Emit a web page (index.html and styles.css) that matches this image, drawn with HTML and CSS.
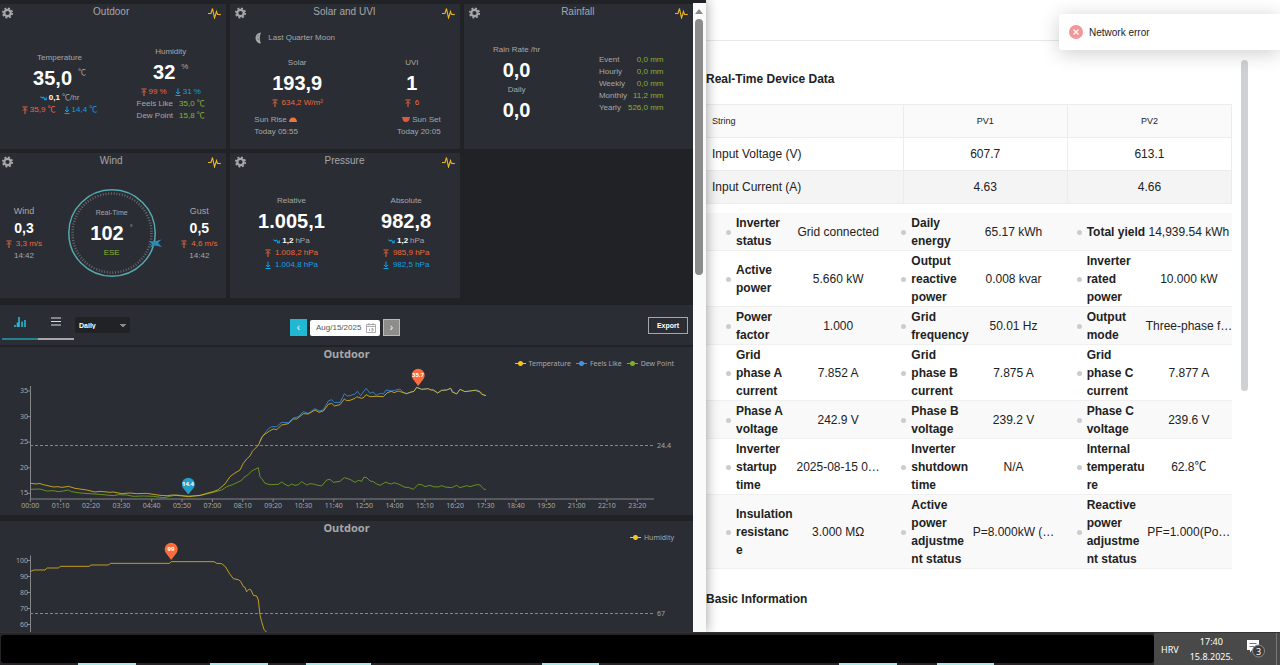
FILE: index.html
```html
<!DOCTYPE html>
<html lang="en">
<head>
    <meta charset="UTF-8">
    <title>Weather and Inverter</title>
    <link rel="stylesheet" href="styles.css">
</head>
<body>
    <svg class="sprite" aria-hidden="true">
        <symbol id="gear" viewBox="0 0 12 12">
            <circle cx="6" cy="6" r="3.2" fill="none" stroke="currentColor" stroke-width="2.2"/>
            <circle cx="6" cy="6" r="4.7" fill="none" stroke="currentColor" stroke-width="1.8" stroke-dasharray="1.9 1.79"/>
        </symbol>
        <symbol id="pulse" viewBox="0 0 13 12">
            <path d="M0 6.500H3L4.500 1.500L6.500 11L8.500 4.500L9.500 7.500H12" fill="none" stroke="currentColor" stroke-width="1.100"/>
            <circle cx="12" cy="7.500" r=".8" fill="currentColor"/>
        </symbol>
        <symbol id="up" viewBox="0 0 6 8">
            <path d="M.5 1H5.500M3 8V2.500M1 4.500L3 2.500L5 4.500" fill="none" stroke="currentColor"/>
        </symbol>
        <symbol id="down" viewBox="0 0 6 8">
            <path d="M.5 7.500H5.500M3 .5V6M1 4L3 6L5 4" fill="none" stroke="currentColor"/>
        </symbol>
        <symbol id="trend" viewBox="0 0 8 6">
            <path d="M.5 1.500L2.500 3L4 2L6 4.500M7.200 2V5H4.500" fill="none" stroke="currentColor" stroke-width="1.200"/>
        </symbol>
    </svg>

    <main class="windows">
        <section class="weather">
            <div class="weather-page">
                <div class="cards">
                    <article class="card">
                        <header>
                            <button class="icon" aria-label="Settings"><svg><use href="#gear"/></svg></button>
                            <h2>Outdoor</h2>
                            <button class="icon pulse" aria-label="Graph"><svg><use href="#pulse"/></svg></button>
                        </header>
                        <div class="body outdoor">
                            <div class="stat">
                                <span>Temperature</span>
                                <div class="value">35,0<sup>℃</sup></div>
                                <div class="line"><svg class="low"><use href="#trend"/></svg><b>0,1</b> ℃/hr</div>
                                <div class="line pair">
                                    <span class="high"><svg><use href="#up"/></svg>35,9 ℃</span>
                                    <span class="low"><svg><use href="#down"/></svg>14,4 ℃</span>
                                </div>
                            </div>
                            <div class="stat">
                                <span>Humidity</span>
                                <div class="value">32<sup>%</sup></div>
                                <div class="line pair">
                                    <span class="high"><svg><use href="#up"/></svg>99 %</span>
                                    <span class="low"><svg><use href="#down"/></svg>31 %</span>
                                </div>
                                <dl class="totals">
                                    <dt>Feels Like</dt><dd>35,0 ℃</dd>
                                    <dt>Dew Point</dt><dd>15,8 ℃</dd>
                                </dl>
                            </div>
                        </div>
                    </article>

                    <article class="card">
                        <header>
                            <button class="icon" aria-label="Settings"><svg><use href="#gear"/></svg></button>
                            <h2>Solar and UVI</h2>
                            <button class="icon pulse" aria-label="Graph"><svg><use href="#pulse"/></svg></button>
                        </header>
                        <div class="moon">
                            <svg viewBox="0 0 8 12"><path d="M7 .5A5.500 5.500 0 0 0 7 11.500Q4.500 6 7 .5Z" fill="#a6a7a9"/><path d="M3 4.500L5 3.500M3 7H5" stroke="#777"/></svg>
                            Last Quarter Moon
                        </div>
                        <div class="body solar">
                            <div class="stat">
                                <span>Solar</span>
                                <div class="value">193,9</div>
                                <div class="line high"><svg><use href="#up"/></svg>634,2 W/m²</div>
                            </div>
                            <div class="stat">
                                <span>UVI</span>
                                <div class="value">1</div>
                                <div class="line high"><svg><use href="#up"/></svg>6</div>
                            </div>
                        </div>
                        <div class="sun">
                            <div>Sun Rise <svg viewBox="0 0 8 5"><path d="M0 5A4 4.500 0 0 1 8 5Z" fill="#f0743d"/></svg><br>Today 05:55</div>
                            <div><svg viewBox="0 0 8 5"><path d="M0 0H8V1H7.500A3.500 4 0 0 1 .5 1H0Z" fill="#dc5a45"/></svg> Sun Set<br>Today 20:05</div>
                        </div>
                    </article>

                    <article class="card">
                        <header>
                            <button class="icon" aria-label="Settings"><svg><use href="#gear"/></svg></button>
                            <h2>Rainfall</h2>
                            <button class="icon pulse" aria-label="Graph"><svg><use href="#pulse"/></svg></button>
                        </header>
                        <div class="body rain">
                            <div class="stat">
                                <span>Rain Rate /hr</span>
                                <div class="value">0,0</div>
                                <span>Daily</span>
                                <div class="value">0,0</div>
                            </div>
                            <dl class="totals">
                                <dt>Event</dt><dd>0,0 mm</dd>
                                <dt>Hourly</dt><dd>0,0 mm</dd>
                                <dt>Weekly</dt><dd>0,0 mm</dd>
                                <dt>Monthly</dt><dd>11,2 mm</dd>
                                <dt>Yearly</dt><dd>526,0 mm</dd>
                            </dl>
                        </div>
                    </article>

                    <article class="card">
                        <header>
                            <button class="icon" aria-label="Settings"><svg><use href="#gear"/></svg></button>
                            <h2>Wind</h2>
                            <button class="icon pulse" aria-label="Graph"><svg><use href="#pulse"/></svg></button>
                        </header>
                        <div class="body wind">
                            <div class="stat small">
                                <span>Wind</span>
                                <div class="value">0,3</div>
                                <div class="line high"><svg><use href="#up"/></svg>3,3 m/s</div>
                                <div class="line">14:42</div>
                            </div>
                            <div class="dial">
                                <svg viewBox="0 0 100 100">
                                    <circle cx="50" cy="50" r="43.200" fill="none" stroke="#56a9ae" stroke-width="1.500"/>
                                    <circle cx="50" cy="50" r="39.500" fill="none" stroke="#66686d" stroke-width="2.500" stroke-dasharray="1 1.758"/>
                                    <path d="M86.500 58L92 58.500L99.500 56.500L96 60L100 64L93 62.500L88 64.500L90 61Z" fill="#2c8ab5"/>
                                </svg>
                                <div class="stat">
                                    <small>Real-Time</small>
                                    <div class="value">102<sup>°</sup></div>
                                    <span class="green">ESE</span>
                                </div>
                            </div>
                            <div class="stat small">
                                <span>Gust</span>
                                <div class="value">0,5</div>
                                <div class="line high"><svg><use href="#up"/></svg>4,6 m/s</div>
                                <div class="line">14:42</div>
                            </div>
                        </div>
                    </article>

                    <article class="card">
                        <header>
                            <button class="icon" aria-label="Settings"><svg><use href="#gear"/></svg></button>
                            <h2>Pressure</h2>
                            <button class="icon pulse" aria-label="Graph"><svg><use href="#pulse"/></svg></button>
                        </header>
                        <div class="body pressure">
                            <div class="stat">
                                <span>Relative</span>
                                <div class="value">1.005,1</div>
                                <div class="line"><svg class="low"><use href="#trend"/></svg><b>1,2</b> hPa</div>
                                <div class="line high"><svg><use href="#up"/></svg>1.008,2 hPa</div>
                                <div class="line low"><svg><use href="#down"/></svg>1.004,8 hPa</div>
                            </div>
                            <div class="stat">
                                <span>Absolute</span>
                                <div class="value">982,8</div>
                                <div class="line"><svg class="low"><use href="#trend"/></svg><b>1,2</b> hPa</div>
                                <div class="line high"><svg><use href="#up"/></svg>985,9 hPa</div>
                                <div class="line low"><svg><use href="#down"/></svg>982,5 hPa</div>
                            </div>
                        </div>
                    </article>
                </div>

                <div class="toolbar">
                    <div class="views">
                        <button class="view active" aria-label="Chart view">
                            <svg viewBox="0 0 12 10"><path d="M1 10V8M3.500 10V5.500M5 10V0M8 10V4.500M11 10V3" stroke="currentColor" stroke-width="1.600"/></svg>
                        </button>
                        <button class="view" aria-label="List view">
                            <svg viewBox="0 0 12 10"><path d="M1 1H11M1 4.500H11M1 8H11" stroke="currentColor" stroke-width="1.200"/></svg>
                        </button>
                        <select class="period" aria-label="Period"><option>Daily</option></select>
                    </div>
                    <div class="dates">
                        <button class="step" aria-label="Previous day">‹</button>
                        <label class="date">
                            <input type="text" value="Aug/15/2025" aria-label="Date">
                            <svg viewBox="0 0 10 10"><path d="M.5 1.500H9.500V9.500H.5ZM.5 3.500H9.500M3 0V2.500M7 0V2.500M3.500 5.500V8M5.500 5.500H7V6.700H5.500M5.500 8H7V6.700" fill="none" stroke="#999" stroke-width=".8"/></svg>
                        </label>
                        <button class="step next" aria-label="Next day">›</button>
                    </div>
                    <button class="export">Export</button>
                </div>

                <section class="chart">
                    <h3>Outdoor</h3>
                    <ul class="legend">
                        <li class="yellow">Temperature</li>
                        <li class="blue">Feels Like</li>
                        <li class="lime">Dew Point</li>
                    </ul>
                    <svg class="plot" viewBox="0 0 693 144">
                        <path class="average" d="M30 74.500H654"/>
                        <text x="657" y="77">24.4</text>
                        <g class="axis" id="temperatureAxis"></g>
                        <!-- readings are on a grid three times finer than the plot -->
                        <g class="series" transform="translate(0 -71) scale(.33333)">
                            <polyline class="lime" points="92,568 120,567 140,573 160,572 175,575 190,573 205,570 215,575 240,579 270,581 300,583 340,587 355,584 380,585 400,589 430,588 460,589 490,593 510,589 530,585 565,588 600,587 640,577 665,570 680,560 700,553 725,541 732,532 740,527 745,524 755,513 765,508 775,503 780,530 787,538 795,550 810,554 835,553 845,546 855,553 865,558 875,552 885,556 895,554 905,545 920,555 930,551 940,552 950,555 965,558 980,540 990,538 1000,547 1020,544 1033,533 1050,538 1065,547 1075,541 1085,544 1092,531 1100,533 1110,543 1120,545 1130,552 1140,556 1158,546 1165,550 1175,552 1182,548 1195,552 1215,562 1225,562 1240,568 1255,553 1265,554 1275,560 1290,556 1300,560 1315,561 1325,557 1335,561 1355,563 1370,556 1380,563 1400,557 1410,560 1430,554 1440,555 1452,568 1458,568"/>
                            <polyline class="blue" points="780,425 790,406 805,386 815,380 830,380 845,367 865,368 880,354 895,350 910,335 925,340 945,326 957,333 970,330 985,303 995,299 1003,308 1020,307 1028,292 1033,281 1042,288 1050,287 1065,282 1072,274 1082,287 1098,265 1110,280 1120,276 1128,286 1142,280 1150,282 1158,270 1175,273 1200,267 1210,277 1220,281 1230,277 1242,274 1250,262 1265,268 1285,266 1300,272 1313,279 1325,271 1340,270 1352,265 1362,278 1370,282 1380,268 1395,275 1430,270 1440,274 1448,283 1458,287"/>
                            <polyline class="yellow" points="92,550 110,552 118,550 130,554 160,561 173,560 185,562 195,561 205,559 225,565 260,570 285,576 300,574 330,577 340,576 365,581 390,579 410,581 440,580 480,586 500,587 520,585 565,590 600,586 620,580 640,575 655,569 675,552 690,530 705,519 720,510 730,490 740,477 750,468 757,454 775,436 785,412 790,406 810,392 820,387 830,389 845,375 865,371 880,357 890,357 910,341 925,342 945,330 957,337 970,333 985,313 995,310 1003,318 1020,314 1033,297 1040,302 1050,301 1065,295 1070,290 1085,295 1092,292 1098,284 1110,290 1130,289 1150,290 1162,278 1175,274 1182,278 1195,273 1210,278 1220,281 1230,277 1242,274 1250,262 1265,268 1285,266 1292,270 1300,269 1313,279 1325,271 1340,270 1352,265 1357,277 1362,278 1370,282 1380,268 1395,275 1410,273 1425,271 1440,276 1445,283 1458,287"/>
                        </g>
                        <g class="pin cold">
                            <path d="M188.300 123.500L183 117A6.500 6.500 0 1 1 193.600 117Z"/>
                            <text x="188" y="115">14.4</text>
                        </g>
                        <g class="pin">
                            <path d="M418.200 15L412.900 8A6.500 6.500 0 1 1 423.500 8Z"/>
                            <text x="418" y="6">35.7</text>
                        </g>
                    </svg>
                </section>

                <section class="chart">
                    <h3>Outdoor</h3>
                    <ul class="legend">
                        <li class="yellow">Humidity</li>
                    </ul>
                    <svg class="plot" viewBox="0 0 693 144">
                        <path class="average" d="M30 68.500H654"/>
                        <text x="657" y="71">67</text>
                        <g class="axis" id="humidityAxis"></g>
                        <g class="series" transform="translate(0 -45) scale(.33333)">
                            <polyline class="yellow" points="92,214 103,210 135,210 142,204 175,204 182,199 268,199 273,195 325,195 332,190 508,190 514,185 642,185 650,190 665,191 677,201 688,220 700,236 715,239 722,244 730,260 735,262 740,275 748,267 753,270 760,286 770,288 775,300 780,345 785,365 792,388 800,397 805,420"/>
                        </g>
                        <g class="pin">
                            <path d="M171.200 15L165.900 8A6.500 6.500 0 1 1 176.500 8Z"/>
                            <text x="171" y="6">99</text>
                        </g>
                    </svg>
                </section>
            </div>
            <div class="scrollbar"><i></i></div>
        </section>

        <section class="inverter">
            <div class="topline"></div>
            <div class="toast" role="alert">
                <svg viewBox="0 0 14 14"><circle cx="7" cy="7" r="7" fill="#f3969a"/><path d="M4.500 4.500L9.500 9.500M9.500 4.500L4.500 9.500" stroke="#fff" stroke-width="1.200"/></svg>
                Network error
            </div>
            <div class="device">
                <h1>Real-Time Device Data</h1>
                <table class="strings">
                    <thead>
                        <tr><th>String</th><th>PV1</th><th>PV2</th></tr>
                    </thead>
                    <tbody>
                        <tr><td>Input Voltage (V)</td><td>607.7</td><td>613.1</td></tr>
                        <tr><td>Input Current (A)</td><td>4.63</td><td>4.66</td></tr>
                    </tbody>
                </table>
                <table class="specs">
                    <tr><th>Inverter status</th><td>Grid connected</td><th>Daily energy</th><td>65.17 kWh</td><th>Total yield</th><td>14,939.54 kWh</td></tr>
                    <tr><th>Active power</th><td>5.660 kW</td><th>Output reactive power</th><td>0.008 kvar</td><th>Inverter rated power</th><td>10.000 kW</td></tr>
                    <tr><th>Power factor</th><td>1.000</td><th>Grid frequency</th><td>50.01 Hz</td><th>Output mode</th><td>Three-phase f…</td></tr>
                    <tr><th>Grid phase A current</th><td>7.852 A</td><th>Grid phase B current</th><td>7.875 A</td><th>Grid phase C current</th><td>7.877 A</td></tr>
                    <tr><th>Phase A voltage</th><td>242.9 V</td><th>Phase B voltage</th><td>239.2 V</td><th>Phase C voltage</th><td>239.6 V</td></tr>
                    <tr><th>Inverter startup time</th><td>2025-08-15 0…</td><th>Inverter shutdown time</th><td>N/A</td><th>Internal temperature</th><td>62.8℃</td></tr>
                    <tr><th>Insulation resistance</th><td>3.000 MΩ</td><th>Active power adjustment status</th><td>P=8.000kW (…</td><th>Reactive power adjustment status</th><td>PF=1.000(Po…</td></tr>
                </table>
                <h1 class="basic">Basic Information</h1>
            </div>
            <div class="thumb"></div>
        </section>
    </main>

    <footer class="taskbar">
        <div class="apps">
            <div class="blank"></div>
            <div class="running"><i></i><i></i><i></i><i></i><i></i><i></i></div>
        </div>
        <span>HRV</span>
        <time>17:40<br>15.8.2025.</time>
        <button class="notices" aria-label="Notifications">
            <svg viewBox="0 0 20 20"><path d="M1 1H13V11H6L4 13.500V11H1Z" fill="#fff"/><path d="M3.500 4.500H10.500M3.500 7.500H8" stroke="#777"/><circle cx="12.500" cy="12" r="6" fill="#3d3d3d" stroke="#8d8d8d"/><text x="12.500" y="15.500" text-anchor="middle">3</text></svg>
        </button>
    </footer>

    <script>
        const ns = 'http://www.w3.org/2000/svg';

        function addPath(parent, d) {
            const path = document.createElementNS(ns, 'path');
            path.setAttribute('d', d);
            parent.appendChild(path);
        }

        function addText(parent, x, y, anchor, value) {
            const text = document.createElementNS(ns, 'text');
            text.setAttribute('x', x);
            text.setAttribute('y', y);
            text.setAttribute('text-anchor', anchor);
            text.textContent = value;
            parent.appendChild(text);
        }

        function drawValues(id, labels, top, step, bottom) {
            const axis = document.getElementById(id);
            addPath(axis, `M30.5 ${top - 5}V${bottom}`);

            labels.forEach((label, i) => {
                const y = top + i * step;
                addPath(axis, `M27 ${y}H30`);
                addText(axis, 28, y + 2, 'end', label);
            });
        }

        function drawTimes(id, bottom) {
            const axis = document.getElementById(id);
            addPath(axis, `M30 ${bottom}H654`);

            // every 70 minutes
            for (let i = 0; i < 21; i++) {
                const x = 30.3 + i * 30.35;
                const hours = String(Math.floor(i * 70 / 60)).padStart(2, '0');
                const minutes = String(i * 70 % 60).padStart(2, '0');
                addPath(axis, `M${x} ${bottom}V${bottom + 3}`);
                addText(axis, x, bottom + 9, 'middle', `${hours}:${minutes}`);
            }
        }

        drawValues('temperatureAxis', [35, 30, 25, 20, 15], 20, 25.6, 128);
        drawTimes('temperatureAxis', 128);
        drawValues('humidityAxis', [100, 90, 80, 70, 60], 15.5, 16, 128);
    </script>
</body>
</html>
```
FILE: styles.css
```css
* {
    box-sizing: border-box;
}

body {
    display: flex;
    flex-direction: column;
    height: 100vh;
    margin: 0;
    overflow: hidden;
    font-family: "Liberation Sans", Arial, "Noto Sans CJK SC", sans-serif;
}

h1, h2, h3, ul, dl, dd {
    margin: 0;
    padding: 0;
}

button, input, select {
    margin: 0;
    padding: 0;
    border: none;
    background: none;
    font-family: inherit;
    color: inherit;
}

.sprite {
    display: none;
}

.windows {
    display: grid;
    grid-template-columns: 706fr 574fr;
    flex: 1;
    min-height: 0;
    overflow: hidden;
}

/* weather station */
.weather {
    position: relative;
    z-index: 1;
    display: flex;
    min-height: 0;
    padding-top: 3px;
    background: #202226;
    box-shadow: 0 0 12px rgba(0, 0, 0, 0.4);
    color: #a6a7a9;
    font-size: 8px;
    line-height: 12px;
}

.weather-page {
    flex: 1;
    min-width: 0;
    padding-top: 1px;
    overflow: hidden;
}

.scrollbar {
    width: 13px;
    padding: 6px 3px 0 2px;
    background: #fafafa;
}

    .scrollbar::before {
        content: "";
        display: block;
        border: 4px solid transparent;
        border-top: none;
        border-bottom: 5px solid #8b8b8b;
    }

    .scrollbar i {
        display: block;
        height: 256px;
        margin-top: 5px;
        border-radius: 4px;
        background: #8b8b8b;
    }

.cards {
    display: grid;
    grid-template-columns: repeat(3, 1fr);
    grid-auto-rows: 145px;
    gap: 4px;
    margin-left: -3px;
}

.card {
    display: flex;
    flex-direction: column;
    background: #2b2d34;
}

    .card header {
        display: flex;
        justify-content: space-between;
        height: 16px;
        padding: 0 5px 0 4px;
    }

    .card h2 {
        font-size: 10px;
        font-weight: normal;
        line-height: 16px;
    }

.icon {
    width: 13px;
    height: 12px;
    margin-top: 3px;
    cursor: pointer;
}

    .icon svg {
        display: block;
        width: 100%;
        height: 100%;
    }

.pulse {
    color: #efb61c;
}

.body {
    display: grid;
    grid-template-columns: 1fr 1fr;
    align-items: center;
    flex: 1;
    padding-bottom: 1px;
}

.outdoor {
    padding-left: 7px;
}

.solar {
    grid-template-columns: 7fr 5fr;
    padding: 2px 0 0;
}

.rain {
    grid-template-columns: 6fr 7fr;
}

.wind {
    grid-template-columns: 4fr 9fr 4fr;
}

.pressure {
    grid-template-columns: 8fr 7fr;
}

.stat {
    display: flex;
    flex-direction: column;
    align-items: center;
}

    .stat small {
        font-size: 7px;
    }

.value {
    display: flex;
    font-size: 20px;
    font-weight: bold;
    line-height: 28px;
    color: #fff;
}

    .value sup {
        margin-left: 6px;
        font-size: 8px;
        font-weight: normal;
        line-height: 18px;
        vertical-align: top;
        color: #a6a7a9;
    }

.small > span {
    font-size: 9px;
    line-height: 14px;
}

.small .value {
    font-size: 14px;
    line-height: 20px;
}

.line {
    display: flex;
    align-items: center;
    gap: 2px;
}

    .line svg {
        width: 6px;
        height: 8px;
        margin-right: 2px;
    }

    .line > svg.low {
        width: 7px;
        height: 6px;
        margin-right: 0;
    }

    .line b {
        color: #fff;
    }

    .line span {
        display: flex;
        align-items: center;
    }

.pair {
    gap: 8px;
}

.high {
    color: #ee683b;
}

.low {
    color: #169fe3;
}

.green,
.totals dd {
    color: #8bb02c;
}

.totals {
    display: grid;
    grid-template-columns: auto auto;
    justify-content: center;
    column-gap: 6px;
}

.rain .totals {
    column-gap: 1px;
}

    .totals dd {
        text-align: right;
    }

.moon {
    display: flex;
    align-items: center;
    gap: 6px;
    height: 12px;
    margin: 12px 0 6px 24px;
}

    .moon svg {
        width: 8px;
        height: 12px;
    }

.sun {
    display: flex;
    justify-content: space-between;
    padding: 0 19px 11px 24px;
}

    .sun div:last-child {
        text-align: right;
    }

    .sun svg {
        width: 8px;
        height: 5px;
    }

.dial {
    display: grid;
    place-items: center;
}

    .dial > * {
        grid-area: 1 / 1;
    }

    .dial > svg {
        width: 100px;
        height: 100px;
    }

/* chart toolbar */
.toolbar {
    display: grid;
    grid-template-columns: 1fr auto 1fr;
    align-items: center;
    height: 40px;
    margin: 7px 0 2px;
    padding: 0 5px 0 2px;
    background: #2b2d34;
}

.views {
    display: flex;
    align-items: center;
}

.view {
    width: 36px;
    height: 30px;
    padding-bottom: 4px;
    border-bottom: 2px solid #a6a7a9;
    color: #ddd;
    cursor: pointer;
}

    .view.active {
        border-color: #25808f;
        color: #23b8d3;
    }

    .view svg {
        width: 12px;
        height: 10px;
    }

.period {
    width: 55px;
    height: 16px;
    margin-left: 1px;
    padding: 0 4px;
    border-radius: 2px;
    appearance: none;
    background: #202226 conic-gradient(from -45deg at 50% 100%, #8a8b8e 90deg, transparent 0) no-repeat 45px 7px / 6px 3px;
    color: #fff;
    font-size: 7px;
    font-weight: bold;
}

.dates {
    display: flex;
    align-items: center;
    gap: 3px;
    margin-top: 5px;
}

.step {
    width: 17px;
    height: 17px;
    background: #20b8d2;
    color: #fff;
    font-size: 10px;
    line-height: 14px;
    cursor: pointer;
}

    .step.next {
        border: 1px solid #bbb;
        background: #8d8d8b;
    }

.date {
    display: flex;
    align-items: center;
    width: 70px;
    height: 16px;
    padding: 0 4px 0 6px;
    border-radius: 2px;
    background: #fff;
}

    .date input {
        flex: 1;
        min-width: 0;
        color: #555;
        font-size: 8px;
    }

    .date svg {
        width: 10px;
        height: 10px;
    }

.export {
    justify-self: end;
    width: 40px;
    height: 17px;
    border: 1px solid #a6a7a9;
    color: #fff;
    font-size: 7px;
    font-weight: bold;
    cursor: pointer;
}

/* charts */
.chart {
    margin-bottom: 6px;
    background: #2b2d34;
    font-family: "Noto Sans", sans-serif;
    font-size: 7px;
}

    .chart h3 {
        font-size: 11px;
        line-height: 13px;
        text-align: center;
    }

.legend {
    display: flex;
    justify-content: flex-end;
    gap: 5px;
    height: 11px;
    padding-right: 19px;
    line-height: 8px;
    list-style: none;
}

    .legend li::before {
        content: "";
        display: inline-block;
        width: 11px;
        height: 5px;
        margin-right: 3px;
        background: radial-gradient(circle, var(--line) 2px, transparent 3px), linear-gradient(var(--line), var(--line)) center / 100% 1px no-repeat;
    }

.yellow {
    --line: #f5c518;
}

.blue {
    --line: #3399f5;
}

.lime {
    --line: #7ab31c;
}

.plot {
    display: block;
    width: 100%;
    height: auto;
    overflow: visible;
}

    .plot text {
        fill: #a6a7a9;
        font-size: 7px;
    }

    .plot path {
        fill: none;
        stroke: #85868a;
    }

    .plot .average {
        stroke-dasharray: 3 2;
    }

    .plot polyline {
        fill: none;
        stroke: var(--line);
        stroke-width: 3px;
        stroke-linejoin: round;
        opacity: 0.75;
    }

    .plot .pin path {
        fill: #fb6b3e;
        stroke: none;
    }

    .plot .cold path {
        fill: #249ec4;
    }

    .plot .pin text {
        fill: #fff;
        font-size: 6px;
        font-weight: bold;
        text-anchor: middle;
    }

/* inverter */
.inverter {
    position: relative;
    display: grid;
    grid-template-columns: 1fr 7px;
    grid-template-rows: 41px 1fr;
    column-gap: 9px;
    min-height: 0;
    padding-right: 32px;
    overflow: hidden;
    background: #fff;
    color: #222;
    font-size: 12px;
}

.topline {
    grid-column: 1 / -1;
    margin-right: -32px;
    border-bottom: 1px solid #e8e8e8;
}

.toast {
    position: absolute;
    top: 14px;
    right: 0;
    display: flex;
    align-items: center;
    gap: 6px;
    width: 221px;
    height: 36px;
    padding-left: 10px;
    border-radius: 3px 0 0 3px;
    background: #fff;
    box-shadow: 0 3px 20px rgba(0, 0, 0, 0.2);
    font-size: 10px;
}

    .toast svg {
        width: 14px;
        height: 14px;
    }

.device h1 {
    margin: 29px 0 15px;
    font-size: 12px;
    line-height: 19px;
}

.device .basic {
    margin-top: 21px;
}

.device table {
    width: 100%;
    border-collapse: collapse;
    table-layout: fixed;
}

.device .strings {
    margin-bottom: 9px;
}

    .strings th,
    .strings td {
        height: 33px;
        padding: 0 6px;
        border: 1px solid #ececec;
        border-left: none;
        text-align: center;
    }

    .strings th {
        background: #fafafa;
        font-size: 9px;
        font-weight: normal;
    }

        .strings th:first-child {
            width: 37.5%;
        }

        .strings th:first-child,
        .strings td:first-child {
            text-align: left;
        }

    .strings tr:last-child td {
        background: #f4f4f4;
    }

    .strings thead th:last-child {
        background: #fafafa;
    }

.specs {
    line-height: 18px;
}

    .specs tr {
        border-bottom: 1px solid #f0f0f0;
    }

    .specs tr:nth-child(odd) {
        background: #f9f9f9;
    }

    .specs th {
        position: relative;
        width: 89px;
        padding: 1px 0 0 30px;
        text-align: left;
        overflow-wrap: anywhere;
    }

        .specs th::before {
            content: "";
            position: absolute;
            top: calc(50% - 2px);
            left: 20px;
            width: 5px;
            height: 5px;
            border-radius: 50%;
            background: #ccc;
        }

    .specs td {
        padding: 0;
        text-align: center;
        white-space: nowrap;
    }

.thumb {
    height: 331px;
    margin-top: 19px;
    border-radius: 4px;
    background: #cfd0d4;
}

/* taskbar */
.taskbar {
    display: flex;
    align-items: center;
    height: 33px;
    border-top: 1px solid #333;
    background: #494949;
    color: #fff;
    font-family: "Noto Sans", sans-serif;
    font-size: 9px;
    line-height: 15px;
}

.apps {
    flex: 1;
    align-self: stretch;
    display: flex;
    flex-direction: column;
    background: #262427;
}

.blank {
    flex: 1;
    margin: 2px 0 0 1px;
    border-radius: 3px;
    background: #000;
}

.running {
    display: grid;
    grid-template-columns: 78fr 58fr 74fr 58fr 37fr 65fr 171fr 57fr 240fr 57fr 40fr 57fr 160fr;
    height: 2px;
}

    .running i {
        background: #a9e6ee;
    }

    .running i:nth-child(1) { grid-column: 2; }
    .running i:nth-child(2) { grid-column: 4; }
    .running i:nth-child(3) { grid-column: 6; }
    .running i:nth-child(4) { grid-column: 8; }
    .running i:nth-child(5) { grid-column: 10; }
    .running i:nth-child(6) { grid-column: 12; }

.taskbar span {
    padding: 0 11px 0 7px;
}

.taskbar time {
    text-align: center;
}

.notices {
    width: 31px;
    height: 32px;
    margin: 0 3px 0 13px;
    border-right: 1px solid #777;
    text-align: left;
}

    .notices svg {
        display: block;
        width: 20px;
        height: 20px;
    }

    .notices text {
        fill: #fff;
        font-size: 9px;
    }
```
